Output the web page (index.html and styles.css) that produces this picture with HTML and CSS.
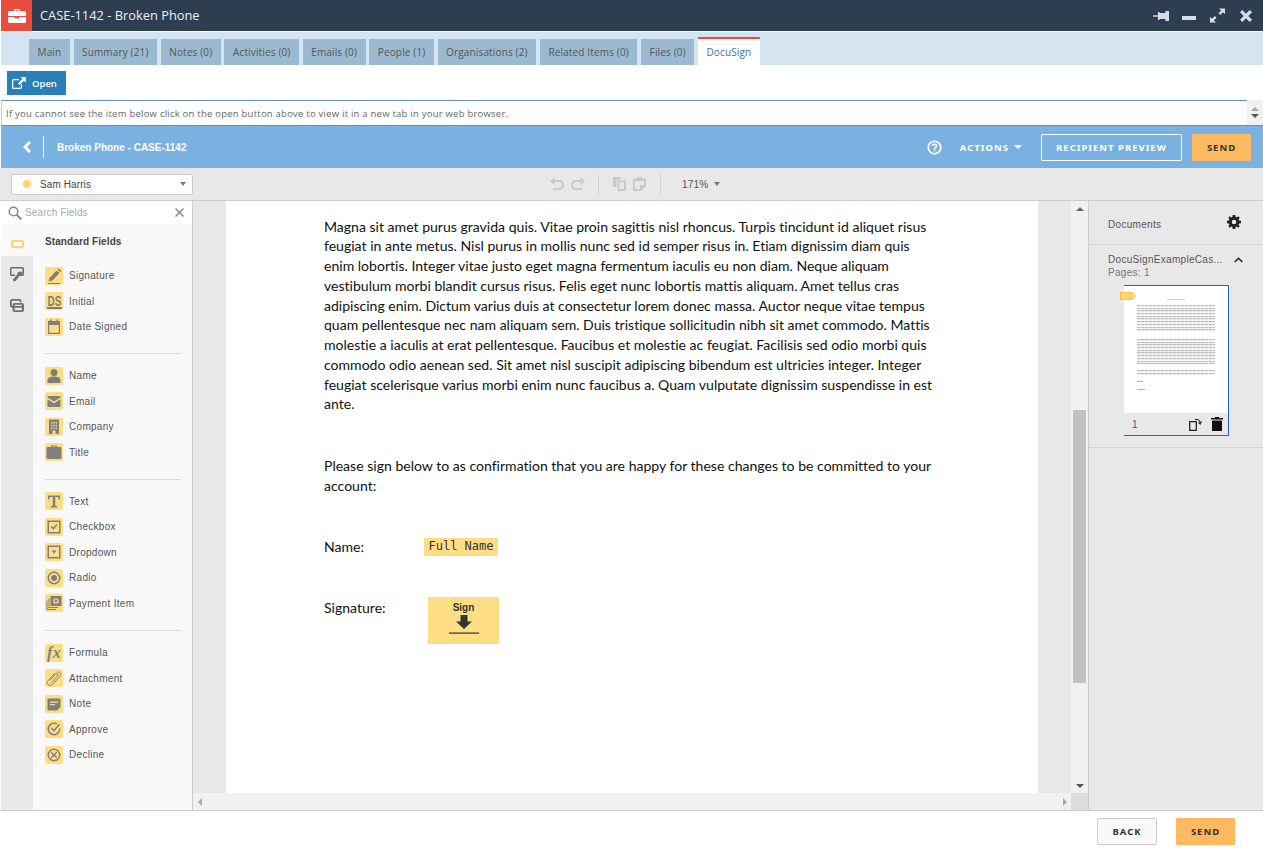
FILE: index.html
```html
<!DOCTYPE html>
<html lang="en">
<head>
<meta charset="utf-8">
<title>CASE-1142 - Broken Phone</title>
<link rel="stylesheet" href="styles.css">
</head>
<body>
<svg class="defs" width="0" height="0" aria-hidden="true">
  <symbol id="i-sig" viewBox="0 0 18 18"><path d="M3 16h12v1H3z"/><path d="M3.500 14.500l1-3.500 7-7.500 3 2.500-7 7.500z"/><path d="M12.500 2.500l1.200-1 2.800 2.500-1 1.200z"/></symbol>
  <symbol id="i-date" viewBox="0 0 18 18"><path fill-rule="evenodd" d="M3 3h2V1.500h1.500V3h5V1.500H13V3h2v13H3zM4.200 7v7.800h9.600V7z"/></symbol>
  <symbol id="i-name" viewBox="0 0 18 18"><circle cx="9" cy="5.500" r="3.500"/><path d="M2.500 16v-3c0-2 2.500-3.500 6.500-3.500s6.500 1.500 6.500 3.500v3z"/></symbol>
  <symbol id="i-mail" viewBox="0 0 18 18"><path d="M2.500 4h13v1.500L9 9.500 2.500 5.500z"/><path d="M2.500 7.200L9 11.200l6.500-4V15h-13z"/></symbol>
  <symbol id="i-comp" viewBox="0 0 18 18"><path fill-rule="evenodd" d="M4 1.500h10V16h-3.500v-3.500h-3V16H4zM6 4v1.500h1.300V4zm2.300 0v1.500h1.400V4zm2.400 0v1.500H12V4zM6 6.700v1.500h1.300V6.700zm2.300 0v1.500h1.400V6.700zm2.400 0v1.500H12V6.700zM6 9.400v1.500h1.300V9.400zm2.300 0v1.500h1.400V9.400zm2.400 0v1.500H12V9.400z"/></symbol>
  <symbol id="i-title" viewBox="0 0 18 18"><path fill-rule="evenodd" d="M6 4V2.500h6V4h3.500a1 1 0 0 1 1 1v10a1 1 0 0 1-1 1h-13a1 1 0 0 1-1-1V5a1 1 0 0 1 1-1zm1.200 0h3.600v-.5H7.200z"/></symbol>
  <symbol id="i-text" viewBox="0 0 18 18"><path d="M3 3.500h12v4h-1.200l-.6-2.500H10.200v8.500l2 .7V15.500H5.800v-1.300l2-.7V5H4.800L4.200 7.500H3z"/></symbol>
  <symbol id="i-check" viewBox="0 0 18 18"><path fill-rule="evenodd" d="M2.500 2.500h13v13h-13zM4 4v10h10V4z"/><path d="M5.500 8.800l1.200-1.100 1.700 1.700 3-3.400 1.100 1-4.100 4.700z"/></symbol>
  <symbol id="i-drop" viewBox="0 0 18 18"><path fill-rule="evenodd" d="M2.500 2.500h13v13h-13zM4 4v10h10V4z"/><path d="M6.500 7.500h5L9 10.800z"/></symbol>
  <symbol id="i-radio" viewBox="0 0 18 18"><path fill-rule="evenodd" d="M9 2.500a6.500 6.500 0 1 1 0 13 6.500 6.500 0 0 1 0-13zM9 4a5 5 0 1 0 0 10A5 5 0 0 0 9 4z"/><circle cx="9" cy="9" r="3"/></symbol>
  <symbol id="i-pay" viewBox="0 0 18 18"><path fill-rule="evenodd" d="M5.500 2h11v10h-11zM11 4.200a2.800 2.800 0 1 0 0 5.600 2.800 2.800 0 0 0 0-5.600z"/><circle cx="11" cy="7" r="1.400"/><path d="M3.500 4.500h1V13H13v1H3.500z"/><path d="M1.500 6.500h1V15H11v1H1.500z"/></symbol>
  <symbol id="i-clip" viewBox="0 0 18 18"><path fill="none" stroke-width="1" d="M5 11.500l6.500-7.500c1-1.200 2.800-1.300 3.700-.4s.9 2.400-.1 3.600l-7.300 8c-1.400 1.400-3.600 1.500-4.700.5s-1-3 .2-4.400l6.500-7.200m-3 9.400l6-6.800c.9-1.200-.4-2.400-1.500-1.400"/></symbol>
  <symbol id="i-note" viewBox="0 0 18 18"><path fill-rule="evenodd" d="M2.500 3.500h13V12l-3.500 3.500H2.500zM5 6.500v1.200h8V6.500zM5 9v1.200h5V9z"/></symbol>
  <symbol id="i-appr" viewBox="0 0 18 18"><path fill-rule="evenodd" d="M9 2.500c1.300 0 2.500.4 3.500 1l-1 1.100A5 5 0 1 0 14 9l1.300-1.400A6.500 6.500 0 1 1 9 2.500z"/><path d="M5.800 8.500l1.100-1.100 2 2 5.100-5.700 1.100 1-6.200 7z"/></symbol>
  <symbol id="i-decl" viewBox="0 0 18 18"><path fill-rule="evenodd" d="M9 2.500a6.500 6.500 0 1 1 0 13 6.500 6.500 0 0 1 0-13zM9 4a5 5 0 1 0 0 10A5 5 0 0 0 9 4z"/><path d="M6.700 5.700L9 8l2.300-2.300 1 1L10 9l2.300 2.300-1 1L9 10l-2.300 2.300-1-1L8 9 5.700 6.700z"/></symbol>
</svg>

<div class="app">
  <header class="titlebar">
    <div class="logo">
      <svg width="18" height="14" viewBox="0 0 18 14"><path class="w" d="M6 2V.8C6 .3 6.300 0 6.800 0h4.400c.5 0 .8.300.8.800V2h4.500c.8 0 1.500.7 1.500 1.500V7H0V3.500C0 2.700.7 2 1.500 2zm1.300 0h3.400V1.200H7.300z"/><path class="w" d="M0 8h7v1.500h4V8h7v4.500c0 .8-.7 1.500-1.500 1.500h-15C.7 14 0 13.300 0 12.500z"/></svg>
    </div>
    <div class="case-title">CASE-1142 - Broken Phone</div>
    <div class="win-icons">
      <svg width="16" height="12" viewBox="0 0 16 12"><path class="g" d="M0 5.200h5V2h1.500v1h6V1H16v10h-3.500V9h-6v1H5V6.800H0z"/></svg>
      <svg width="14" height="12" viewBox="0 0 14 12"><path class="g" d="M0 6h14v4H0z"/></svg>
      <svg width="15" height="15" viewBox="0 0 16 15"><path class="g" d="M9.500 0H16v6l-2.200-2-3 3-1.800-1.800 3-3zM6.500 15H0V9l2.200 2 3-3L7 9.800l-3 3z"/></svg>
      <svg class="win-x" width="12" height="12" viewBox="0 0 13 13"><path class="g" d="M0 2.500L2.500 0l4 4 4-4L13 2.500l-4 4 4 4-2.500 2.500-4-4-4 4L0 10.500l4-4z"/></svg>
    </div>
  </header>

  <nav class="tabs">
    <a class="tab">Main</a>
    <a class="tab">Summary (21)</a>
    <a class="tab">Notes (0)</a>
    <a class="tab">Activities (0)</a>
    <a class="tab">Emails (0)</a>
    <a class="tab">People (1)</a>
    <a class="tab">Organisations (2)</a>
    <a class="tab">Related Items (0)</a>
    <a class="tab">Files (0)</a>
    <a class="tab active">DocuSign</a>
  </nav>

  <div class="open-row">
    <button class="open-btn">
      <svg width="14" height="12" viewBox="0 0 14 12"><path class="w" fill-rule="evenodd" d="M1.500 2H7v1.200H2a.8.8 0 0 0-.8.8v6c0 .4.400.8.800.8h6c.4 0 .8-.4.800-.8V7H10v3.500c0 .8-.7 1.500-1.500 1.500h-7C.7 12 0 11.300 0 10.500v-7C0 2.700.7 2 1.500 2z"/><path class="w" d="M8.500 0H14v5.500l-2-1.800L7.500 8 6 6.500l4.300-4.500z"/></svg>
      <span>Open</span>
    </button>
  </div>

  <div class="notice-row">
    <div class="notice">If you cannot see the item below click on the open button above to view it in a new tab in your web browser.</div>
    <div class="notice-scroll"><i class="tri up light"></i><i class="tri down"></i></div>
  </div>

  <div class="ds-bar">
    <svg class="back" width="8" height="12" viewBox="0 0 8 12"><path class="w" d="M6 0l2 2-4 4 4 4-2 2-6-6z"/></svg>
    <div class="ds-title">Broken Phone - CASE-1142</div>
    <svg class="help" width="15" height="15" viewBox="0 0 16 16"><circle cx="8" cy="8" r="6.700" fill="none" stroke="#fff" stroke-width="1.800"/><path fill="none" stroke="#fff" stroke-width="1.700" d="M5.800 6.500C5.800 5.200 6.800 4.500 8 4.500s2.200.7 2.200 1.900c0 1.600-2.200 1.500-2.200 3.100"/><path class="w" d="M7.100 10.300h1.800v1.700H7.100z"/></svg>
    <div class="actions">ACTIONS<i class="tri down white"></i></div>
    <button class="preview-btn">RECIPIENT PREVIEW</button>
    <button class="send-btn">SEND</button>
  </div>

  <div class="toolbar">
    <div class="recipient"><span class="dot"></span><span class="rname">Sam Harris</span><i class="tri down mid"></i></div>
    <div class="tools">
      <svg width="14" height="14" viewBox="0 0 14 14"><path class="t" d="M0 4.500L4.500 0v3H9c2.800 0 5 2 5 5s-2.200 5-5 5H3v-2h6c1.700 0 3-1.300 3-3s-1.300-3-3-3H4.500v3z"/></svg>
      <svg width="14" height="14" viewBox="0 0 14 14"><path class="t" d="M14 4.500L9.500 0v3H5C2.200 3 0 5 0 8s2.200 5 5 5h6v-2H5c-1.700 0-3-1.300-3-3s1.300-3 3-3h4.500v3z"/></svg>
      <span class="sep sep1"></span>
      <svg width="13" height="14" viewBox="0 0 13 14"><path class="t" fill-rule="evenodd" d="M0 0h8v2.500H5A1.500 1.500 0 0 0 3.500 4v6H0zM4.500 3.500H13V14H4.500zM6.500 5.500V12H11V5.500z"/></svg>
      <svg width="13" height="14" viewBox="0 0 13 14"><path class="t" fill-rule="evenodd" d="M4 1.500C4 .7 5 0 6.500 0S9 .7 9 1.500h3a1 1 0 0 1 1 1V9l-5 5H1a1 1 0 0 1-1-1V2.500a1 1 0 0 1 1-1zM2 4v8h5V8h4V4z"/></svg>
      <span class="sep sep2"></span>
      <span class="zoom">171%</span><i class="tri down mid small"></i>
    </div>
  </div>

  <main class="workspace">
    <aside class="fields">
      <div class="search">
        <svg width="14" height="14" viewBox="0 0 14 14"><circle cx="5.500" cy="5.500" r="4.300" fill="none" stroke="#888" stroke-width="1.500"/><path stroke="#888" stroke-width="2" d="M8.700 8.700l4.500 4.500"/></svg>
        <span class="search-text">Search Fields</span>
        <svg class="search-x" width="9" height="9" viewBox="0 0 9 9"><path stroke="#888" stroke-width="1.500" d="M.5.500l8 8m0-8l-8 8"/></svg>
      </div>
      <div class="fields-body">
        <div class="rail">
          <div class="rail-item on"><span class="rail-rect"></span></div>
          <div class="rail-item">
            <svg width="15" height="15" viewBox="0 0 15 15"><path class="r" fill-rule="evenodd" d="M1.500 0h11A1.500 1.500 0 0 1 14 1.500v6A1.500 1.500 0 0 1 12.500 9h-3l1.200-1.600h1.800V1.600h-11v5.800H5V9H1.500A1.500 1.500 0 0 1 0 7.500v-6A1.500 1.500 0 0 1 1.500 0z"/><path class="r" d="M10.500 4.500l2.200 1-1 2.500-2 .5-4 5.500-2.200.5-.5-2 4.500-5.300.2-2z"/></svg>
          </div>
          <div class="rail-item">
            <svg width="14" height="13" viewBox="0 0 14 13"><path class="r" fill-rule="evenodd" d="M2 0h7.500A2 2 0 0 1 11.500 2v1.300H9.700V1.800H1.800V7H3v1.800H2A2 2 0 0 1 0 6.800V2A2 2 0 0 1 2 0z"/><path class="r" fill-rule="evenodd" d="M4.500 4h7.500A2 2 0 0 1 14 6v5a2 2 0 0 1-2 2H4.500a2 2 0 0 1-2-2V6a2 2 0 0 1 2-2zm.1 1.700V7h7.300V5.700zm0 3v2.600h7.300V8.700z"/></svg>
          </div>
        </div>
        <div class="field-list">
          <h2 class="field-head">Standard Fields</h2>
          <ul class="group">
            <li class="field"><span class="fi"><svg><use href="#i-sig"/></svg></span>Signature</li>
            <li class="field"><span class="fi fi-ds"><b>DS</b></span>Initial</li>
            <li class="field"><span class="fi"><svg><use href="#i-date"/></svg></span>Date Signed</li>
          </ul>
          <ul class="group">
            <li class="field"><span class="fi"><svg><use href="#i-name"/></svg></span>Name</li>
            <li class="field"><span class="fi"><svg><use href="#i-mail"/></svg></span>Email</li>
            <li class="field"><span class="fi"><svg><use href="#i-comp"/></svg></span>Company</li>
            <li class="field"><span class="fi"><svg><use href="#i-title"/></svg></span>Title</li>
          </ul>
          <ul class="group">
            <li class="field"><span class="fi"><svg><use href="#i-text"/></svg></span>Text</li>
            <li class="field"><span class="fi"><svg><use href="#i-check"/></svg></span>Checkbox</li>
            <li class="field"><span class="fi"><svg><use href="#i-drop"/></svg></span>Dropdown</li>
            <li class="field"><span class="fi"><svg><use href="#i-radio"/></svg></span>Radio</li>
            <li class="field"><span class="fi"><svg><use href="#i-pay"/></svg></span>Payment Item</li>
          </ul>
          <ul class="group last">
            <li class="field"><span class="fi fi-fx"><em>fx</em></span>Formula</li>
            <li class="field"><span class="fi"><svg><use href="#i-clip"/></svg></span>Attachment</li>
            <li class="field"><span class="fi"><svg><use href="#i-note"/></svg></span>Note</li>
            <li class="field"><span class="fi"><svg><use href="#i-appr"/></svg></span>Approve</li>
            <li class="field"><span class="fi"><svg><use href="#i-decl"/></svg></span>Decline</li>
          </ul>
        </div>
      </div>
    </aside>

    <section class="canvas">
      <div class="canvas-top">
        <div class="gutter">
          <article class="page">
            <p class="para">Magna sit amet purus gravida quis. Vitae proin sagittis nisl rhoncus. Turpis tincidunt id aliquet risus<br>feugiat in ante metus. Nisl purus in mollis nunc sed id semper risus in. Etiam dignissim diam quis<br>enim lobortis. Integer vitae justo eget magna fermentum iaculis eu non diam. Neque aliquam<br>vestibulum morbi blandit cursus risus. Felis eget nunc lobortis mattis aliquam. Amet tellus cras<br>adipiscing enim. Dictum varius duis at consectetur lorem donec massa. Auctor neque vitae tempus<br>quam pellentesque nec nam aliquam sem. Duis tristique sollicitudin nibh sit amet commodo. Mattis<br>molestie a iaculis at erat pellentesque. Faucibus et molestie ac feugiat. Facilisis sed odio morbi quis<br>commodo odio aenean sed. Sit amet nisl suscipit adipiscing bibendum est ultricies integer. Integer<br>feugiat scelerisque varius morbi enim nunc faucibus a. Quam vulputate dignissim suspendisse in est<br>ante.</p>
            <p class="para confirm">Please sign below to as confirmation that you are happy for these changes to be committed to your<br>account:</p>
            <div class="sign-row name-row"><span class="sign-label">Name:</span><span class="full-name">Full Name</span></div>
            <div class="sign-row sig-row"><span class="sign-label">Signature:</span>
              <span class="sign-tag"><span>Sign</span>
                <svg width="30" height="20" viewBox="0 0 30 20"><path fill="#333" d="M11.500 0h7v6.500H23L15 14 7 6.500h4.500z"/><path fill="#333" d="M0 17.500h30v1.200H0z"/></svg>
              </span>
            </div>
          </article>
        </div>
        <div class="vscroll"><i class="tri up dark"></i><div class="vtrack"><div class="vthumb"></div></div><i class="tri down dark"></i></div>
      </div>
      <div class="canvas-bottom">
        <div class="hscroll"><i class="tri left"></i><i class="tri right"></i></div>
        <div class="corner"></div>
      </div>
    </section>

    <aside class="docs">
      <div class="docs-head">
        <span class="docs-label">Documents</span>
        <svg class="gear" width="14" height="14" viewBox="0 0 14 14"><path fill="#222" fill-rule="evenodd" d="M5.700 0h2.600l.3 1.900 1.100.5L11.300 1.300l1.400 1.400-1.100 1.600.5 1.100 1.900.3v2.600l-1.900.3-.5 1.100 1.100 1.600-1.400 1.400-1.600-1.100-1.100.5-.3 1.900H5.700l-.3-1.900-1.100-.5-1.600 1.100-1.400-1.400 1.100-1.600-.5-1.100L0 8.300V5.700l1.900-.3.500-1.100-1.100-1.600 1.400-1.400 1.600 1.100 1.100-.5zM7 4.700a2.300 2.300 0 1 0 0 4.600 2.300 2.300 0 0 0 0-4.600z"/></svg>
      </div>
      <div class="doc-item">
        <div class="doc-name"><span>DocuSignExampleCas...</span>
          <svg width="9" height="6" viewBox="0 0 9 6"><path fill="none" stroke="#222" stroke-width="1.500" d="M.7 5L4.500 1.200 8.300 5"/></svg>
        </div>
        <div class="doc-pages">Pages: 1</div>
        <div class="thumb">
          <span class="thumb-tag"></span>
          <div class="thumb-page">
            <div class="tline title"></div>
            <div class="tblock b1"></div>
            <div class="tblock b2"></div>
            <div class="tblock b3"></div>
            <div class="tline s1"></div>
            <div class="tline s2"></div>
          </div>
          <div class="thumb-foot">
            <span>1</span>
            <svg class="rot" width="14" height="13" viewBox="0 0 14 13"><path fill="none" stroke="#222" stroke-width="1.300" d="M.7 3.700h6.600v8.600H.7z"/><path fill="none" stroke="#222" stroke-width="1" d="M6 1.500h3.500l1.500 2.500"/><path fill="#222" d="M9 5l4-2-1.500 4z"/></svg>
            <svg width="12" height="14" viewBox="0 0 12 14"><path fill="#111" d="M4 0h4v1h4v1.500H0V1h4zM1 3.500h10V14H1z"/></svg>
          </div>
        </div>
      </div>
    </aside>
  </main>

  <footer class="footer">
    <button class="back-btn">BACK</button>
    <button class="send-btn foot-send">SEND</button>
  </footer>
</div>
</body>
</html>
```
FILE: styles.css
```css
* { box-sizing: border-box; }
html, body { margin: 0; padding: 0; background: #fff; }
body { width: 1263px; height: 851px; overflow: hidden; font-family: "Open Sans", sans-serif; color: #555; }
.defs { position: absolute; }
button { font: inherit; cursor: pointer; }
.w { fill: #fff; }
.g { fill: #d8dde2; }
.t { fill: #c9c9c9; }
.r { fill: #6e6e6e; }

.app { display: flex; flex-direction: column; height: 851px; padding-left: 1px; }

.titlebar { height: 31px; flex: none; display: flex; align-items: center; background: #2d3e50; margin-left: -1px; }
.logo { width: 32px; height: 31px; margin-right: 1px; display: flex; align-items: center; justify-content: center; background: #e74c3c; border-left: 1px solid #fff; }
.case-title { margin: 0 0 2px 7px; font-size: 12.850px; color: #ecf0f1; }
.win-icons { margin-left: auto; display: flex; align-items: center; gap: 13.500px; padding-right: 11px; }
.win-x { margin-left: 2px; }

.tabs { height: 33px; margin-top: 1px; flex: none; display: flex; align-items: flex-end; gap: 3.700px; padding-left: 28px; background: #d4e5f1; }
.tab { height: 26px; padding: 0 8.500px; display: flex; align-items: center; font-size: 10px; letter-spacing: .15px; color: #555; background: #9bb9d0; }
.tab.active { height: 28px; border-top: 2px solid #e74c3c; background: #fff; color: #3c6eb4; }

.open-row { height: 35px; flex: none; padding: 6px 0 0 6px; }
.open-btn { width: 59px; height: 24px; padding: 0 0 0 5px; display: flex; align-items: center; gap: 6px; border: 0; background: #2980b9; color: #fff; font-size: 9.500px; font-weight: 600; }

.notice-row { height: 26px; flex: none; display: flex; }
.notice { flex: 1; display: flex; align-items: center; padding-left: 4px; border: 1px solid #6c8ebf; border-right: 0; border-left: 1px solid #ccc; font-size: 9.500px; letter-spacing: .23px; color: #666; }
.notice-scroll { width: 16px; display: flex; flex-direction: column; align-items: center; justify-content: space-around; padding: 5px 0; background: #f1f1f1; border-bottom: 1px solid #6c8ebf; }

.tri { display: block; width: 0; height: 0; border-style: solid; flex: none; }
.tri.up { border-width: 0 4px 4px; border-color: transparent transparent #666; }
.tri.up.light { border-bottom-color: #a8a8a8; }
.tri.down { border-width: 4px 4px 0; border-color: #555 transparent transparent; }
.tri.left { border-width: 4px 4px 4px 0; border-color: transparent #a8a8a8 transparent transparent; }
.tri.right { border-width: 4px 0 4px 4px; border-color: transparent transparent transparent #a8a8a8; }
.tri.down.white { border-top-color: #fff; margin-left: 5px; }
.tri.down.mid { border-width: 4px 3.500px 0; border-top-color: #777; }
.tri.small { margin-left: -1px; }

.ds-bar { height: 42px; flex: none; display: flex; align-items: center; background: #79b1e0; font-family: "Noto Sans", sans-serif; }
.back { margin-left: 22px; }
.ds-title { height: 22px; margin-left: 12px; padding-left: 13px; display: flex; align-items: center; border-left: 1px solid #fff; font-family: "Liberation Sans", sans-serif; font-size: 10px; font-weight: 700; color: #fff; }
.help { margin-left: auto; }
.actions { margin-left: 18px; display: flex; align-items: center; font-size: 9.500px; font-weight: 700; letter-spacing: 1px; color: #fff; }
.preview-btn { width: 141px; height: 27px; margin-left: 19px; padding: 0; border: 1px solid #fff; border-radius: 1px; background: transparent; font-size: 9.500px; font-weight: 700; letter-spacing: 1px; color: #fff; }
.send-btn { width: 59px; height: 27px; padding: 0; border: 0; border-radius: 1px; background: #ffb960; font-family: "Noto Sans", sans-serif; font-size: 9.500px; font-weight: 700; letter-spacing: 1px; color: #333; }
.ds-bar .send-btn { margin: 0 12px 0 10px; }

.toolbar { height: 33px; flex: none; display: flex; align-items: center; margin-left: -1px; background: #e8e8e8; border-bottom: 1px solid #ccc; font-family: "Liberation Sans", sans-serif; }
.recipient { width: 182px; height: 21px; margin-left: 11px; padding: 0 6px 0 11px; display: flex; align-items: center; background: #fff; border: 1px solid #ccc; border-radius: 2px; font-size: 10px; color: #444; }
.dot { width: 8px; height: 8px; border-radius: 50%; background: #ffd76e; margin-right: 9px; }
.rname { flex: 1; letter-spacing: .1px; }
.tools { margin-left: 357px; display: flex; align-items: center; gap: 7px; }
.sep { width: 1px; height: 21px; background: #d2d2d2; }
.sep1 { margin: 0 7px 0 6px; }
.sep2 { margin: 0 14px 0 7px; }
.zoom { font-size: 10px; letter-spacing: .2px; color: #555; }

.workspace { flex: 1; min-height: 0; display: flex; border-bottom: 1px solid #ccc; margin-left: -1px; padding-left: 1px; }

.fields { width: 192px; flex: none; display: flex; flex-direction: column; background: #f9f9f9; border-right: 1px solid #ccc; font-family: "Liberation Sans", sans-serif; }
.search { height: 23px; flex: none; display: flex; align-items: center; padding-left: 7px; background: #fff; }
.search-text { margin-left: 3px; font-size: 10px; letter-spacing: .12px; color: #aaa; }
.search-x { margin-left: auto; margin-right: 8px; }
.fields-body { flex: 1; display: flex; }
.rail { width: 32px; flex: none; background: #e9e9e9; }
.rail-item { height: 32px; display: flex; align-items: center; justify-content: center; }
.rail-item:nth-child(2) { height: 31px; margin-top: 3px; }
.rail-item.on { height: 32px; background: #f9f9f9; padding-top: 7px; }
.rail-item:nth-child(3) { height: 31px; }
.rail-rect { width: 13px; height: 8px; border: 2px solid #fdd56b; border-radius: 2px; background: #fff; }
.field-list { flex: 1; padding: 0 11px 0 12px; }
.field-head { height: 38.800px; margin: 0; padding-top: 11px; font-size: 10px; line-height: 14px; font-weight: 700; letter-spacing: .1px; color: #444; }
.group { margin: 0 0 9px; padding: 0 0 13.700px; list-style: none; border-bottom: 1px solid #d9d9d9; }
.group.last { border: 0; }
.field { height: 25.500px; display: flex; align-items: center; gap: 6px; font-size: 10px; letter-spacing: .3px; color: #555; }
.fi { width: 18px; height: 18px; flex: none; display: flex; align-items: center; justify-content: center; background: #fede85; border-radius: 2px; }
.fi svg { width: 18px; height: 18px; fill: #7f7f7f; stroke: #7f7f7f; stroke-width: 0; }
.fi-ds { overflow: hidden; }
.fi-ds b { flex: none; padding: 0 1px; font-size: 15px; line-height: 13px; letter-spacing: 0; transform: scaleX(.66); color: #7f7f7f; border-bottom: 2px solid #7f7f7f; }
.fi-fx em { font-family: "Liberation Serif", serif; font-size: 16px; font-weight: 700; color: #7f7f7f; line-height: 18px; }

.canvas { flex: 1; min-width: 0; display: flex; flex-direction: column; background: #e8e8e8; }
.canvas-top { flex: 1; min-height: 0; display: flex; }
.gutter { flex: 1; min-width: 0; padding: 0 33px; }
.page { height: 100%; padding: 15.500px 0 0 98px; background: #fff; font-family: "Lato", sans-serif; font-size: 14.050px; font-variant-ligatures: none; line-height: 19.750px; color: #111; white-space: nowrap; }
.para { margin: 0; }
.confirm { margin-top: 42.300px; }
.sign-row { display: flex; }
.sign-label { width: 100px; flex: none; }
.name-row { margin-top: 41px; align-items: center; }
.full-name { height: 18px; margin-top: 1px; padding: 0 4.500px; display: flex; align-items: center; background: #fede85; font-family: "DejaVu Sans Mono", monospace; font-size: 12px; color: #333; }
.sig-row { margin-top: 40px; }
.sig-row .sign-label { width: 104px; padding-top: 1px; }
.sign-tag { width: 71px; height: 47px; padding-top: 5px; display: flex; flex-direction: column; align-items: center; gap: 1px; background: #fede85; font-family: "Liberation Sans", sans-serif; font-size: 10px; font-weight: 700; line-height: 12px; color: #333; }
.vscroll { width: 17px; flex: none; display: flex; flex-direction: column; align-items: center; justify-content: space-between; padding: 6px 0 5px; background: #f1f1f1; }
.vtrack { flex: 1; width: 100%; padding-top: 199px; display: flex; justify-content: center; }
.vthumb { width: 13px; height: 273px; background: #c1c1c1; }
.canvas-bottom { height: 17px; flex: none; display: flex; }
.hscroll { flex: 1; display: flex; align-items: center; justify-content: space-between; padding: 0 4px 0 5px; background: #f1f1f1; }
.corner { width: 17px; background: #dcdcdc; }

.docs { width: 175px; flex: none; background: #e8e8e8; border-left: 1px solid #ccc; font-family: "Liberation Sans", sans-serif; font-size: 10px; letter-spacing: .3px; color: #555; }
.docs-head { height: 44px; display: flex; align-items: center; justify-content: space-between; padding: 0 22px 0 19px; border-bottom: 1px solid #d4d4d4; }
.docs-label { margin-top: 3px; }
.gear { margin-bottom: 2px; }
.doc-item { height: 203px; padding: 8px 0 0 19px; border-bottom: 1px solid #d4d4d4; }
.doc-name { width: 135px; height: 13px; display: flex; align-items: center; justify-content: space-between; color: #555; }
.doc-pages { height: 14px; line-height: 14px; color: #777; }
.thumb { position: relative; width: 105px; height: 151px; margin: 5px 0 0 16px; display: flex; flex-direction: column; border: 1px solid #2a5fc4; border-left: 0; }
.thumb-tag { position: absolute; left: -4px; top: 6px; width: 16px; height: 8px; background: #fdd56b; border: 1px solid #f2c14e; clip-path: polygon(0 0, 75% 0, 100% 50%, 75% 100%, 0 100%); }
.thumb-page { height: 127px; padding: 13px 13px 0 13px; background: #fff; }
.tline { height: 1px; background: #b0b0b0; }
.title { width: 18px; margin: 0 auto 5px; background: #c3d5ef; }
.tblock { background-image: repeating-linear-gradient(90deg, transparent 0, transparent 3px, rgba(255,255,255,.4) 3px, rgba(255,255,255,.4) 4px), repeating-linear-gradient(#bcbcbc 0, #bcbcbc 1px, #e6e6e6 1px, #fff 2.700px); }
.b1 { height: 27px; margin-bottom: 7px; }
.b2 { height: 25px; margin-bottom: 6px; }
.b3 { height: 5px; margin-bottom: 6px; }
.s1 { width: 6px; margin-bottom: 7px; }
.s2 { width: 8px; }
.thumb-foot { flex: 1; display: flex; align-items: center; padding: 0 5px 0 8px; gap: 8px; color: #555; }
.thumb-foot span { flex: 1; }

.footer { height: 40px; flex: none; display: flex; align-items: center; justify-content: flex-end; padding: 1px 28px 0 0; gap: 19px; background: #fff; }
.back-btn { width: 60px; height: 27px; padding: 0; background: #f9f9f9; border: 1px solid #ccc; border-radius: 2px; font-family: "Noto Sans", sans-serif; font-size: 9.500px; font-weight: 700; letter-spacing: 1px; color: #333; }
```
